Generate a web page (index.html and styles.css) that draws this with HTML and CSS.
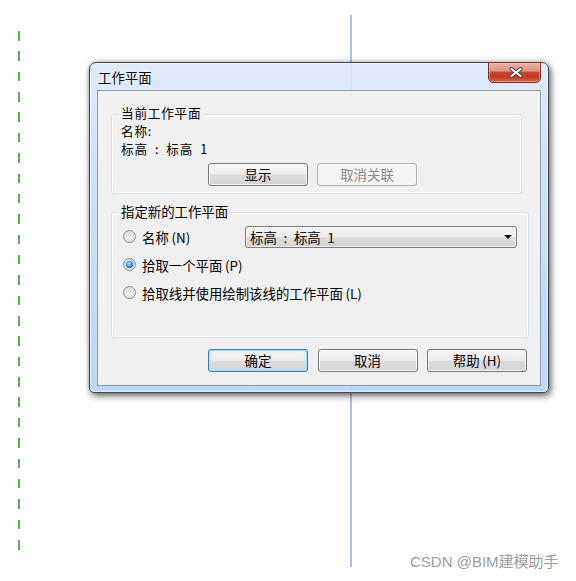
FILE: index.html
```html
<!DOCTYPE html>
<html lang="zh-CN">
<head>
<meta charset="utf-8">
<title>工作平面</title>
<link rel="stylesheet" href="styles.css">
</head>
<body>
<div class="canvas">
  <div class="dash-line"></div>
  <div class="ref-line"></div>

  <div class="dialog">
    <div class="titlebar">
      <span class="title">工作平面</span>
      <button class="close" type="button" aria-label="关闭">
        <svg width="14" height="11" viewBox="0 0 14 11">
          <path d="M2.5 2 L11.5 9 M11.5 2 L2.5 9" stroke="#4a3a38" stroke-width="4" stroke-linecap="round" fill="none"/>
          <path d="M2.5 2 L11.5 9 M11.5 2 L2.5 9" stroke="#ffffff" stroke-width="2.2" stroke-linecap="round" fill="none"/>
        </svg>
      </button>
    </div>

    <div class="client">
      <div class="group group-current">
        <div class="legend">当前工作平面</div>
        <div class="line">名称:</div>
        <div class="line">标高&#8194;:&#8194;标高&#8194;1</div>
        <div class="btn-row">
          <button class="btn" type="button">显示</button>
          <button class="btn" type="button" disabled>取消关联</button>
        </div>
      </div>

      <div class="group group-new">
        <div class="legend">指定新的工作平面</div>
        <div class="opt">
          <span class="radio"></span>
          <span class="opt-label">名称&#8201;(N)</span>
          <div class="combo">
            <span class="combo-text">标高&#8194;:&#8194;标高&#8194;1</span>
            <span class="arrow"></span>
          </div>
        </div>
        <div class="opt">
          <span class="radio checked"></span>
          <span class="opt-label">拾取一个平面&#8201;(P)</span>
        </div>
        <div class="opt">
          <span class="radio"></span>
          <span class="opt-label">拾取线并使用绘制该线的工作平面&#8201;(L)</span>
        </div>
      </div>

      <div class="actions">
        <button class="btn default" type="button">确定</button>
        <button class="btn" type="button">取消</button>
        <button class="btn" type="button">帮助&#8201;(H)</button>
      </div>
    </div>
  </div>

  <div class="watermark">CSDN @BIM建模助手</div>
</div>
</body>
</html>
```

FILE: styles.css
```css
html, body {
  margin: 0;
  padding: 0;
  background: #ffffff;
}

.canvas {
  position: relative;
  width: 576px;
  height: 581px;
  overflow: hidden;
  background: #ffffff;
  font-family: "Noto Sans CJK SC", "Liberation Sans", sans-serif;
  font-size: 13.4px;
  color: #000;
}

/* background drawing lines of the view */
.dash-line {
  position: absolute;
  left: 18px;
  top: 31px;
  width: 2px;
  height: 520px;
  background: repeating-linear-gradient(to bottom, #64a464 0, #64a464 9.5px, transparent 9.5px, transparent 20.36px);
}

.ref-line {
  position: absolute;
  left: 350px;
  top: 15px;
  width: 2px;
  height: 552px;
  background: #a9c0ea;
}

/* dialog window */
.dialog {
  position: absolute;
  left: 89px;
  top: 62px;
  width: 460px;
  height: 331px;
  box-sizing: border-box;
  border: 1px solid #3f4650;
  border-radius: 7px 7px 5px 5px;
  background: linear-gradient(to bottom, rgba(222, 234, 248, 0.93) 0%, rgba(204, 222, 244, 0.93) 30%, rgba(188, 213, 242, 0.95) 100%);
  box-shadow: inset 0 0 0 1px rgba(255, 255, 255, 0.55), 2px 3px 7px rgba(0, 0, 0, 0.55), 0 0 4px rgba(0, 0, 0, 0.25);
  padding: 0 7px 6px 7px;
  display: flex;
  flex-direction: column;
}

.titlebar {
  height: 27px;
  flex: none;
  display: flex;
  justify-content: space-between;
  align-items: flex-start;
}

.title {
  line-height: 28px;
  padding-left: 1px;
  color: #0a0a0a;
  text-shadow: 0 0 6px rgba(255, 255, 255, 0.9);
}

.close {
  margin-top: -1px;
  width: 53px;
  height: 21px;
  padding: 0;
  box-sizing: border-box;
  border: 1px solid #6e3429;
  border-radius: 0 0 5px 5px;
  background: linear-gradient(to bottom, #ebb3a7 0%, #e0907f 42%, #c9452d 50%, #c13b22 72%, #d9654b 100%);
  box-shadow: inset 0 0 0 1px rgba(255, 200, 190, 0.45);
  display: flex;
  align-items: center;
  justify-content: center;
}

.close svg {
  display: block;
  margin-left: 2px;
}

.client {
  flex: 1;
  box-sizing: border-box;
  border: 1px solid #8e9aa7;
  background: #f0f0f0;
  padding: 23px 11px 0 13px;
  display: flex;
  flex-direction: column;
}

/* group boxes */
.group {
  border: 1px solid #d5dfe5;
  border-radius: 3px;
  box-shadow: inset 0 0 0 1px #ffffff;
}

.legend {
  width: fit-content;
  margin-top: -10px;
  line-height: 16px;
  padding: 0 2px;
  background: #f0f0f0;
}

.group-current {
  margin-right: 7px;
  padding: 0 8px 7px 9px;
}

.group-current .legend {
  margin-left: -2px;
  margin-top: -11px;
  font-size: 12.6px;
  letter-spacing: 0.8px;
  line-height: 18px;
}

.line {
  font-size: 12.6px;
  letter-spacing: 0.8px;
  line-height: 18.3px;
}

.btn-row {
  margin-top: 4px;
  padding-left: 87px;
  display: flex;
  gap: 9px;
}

.group-new {
  margin-top: 18px;
  padding: 0 11px 30px 11px;
}

.group-new .legend {
  margin-left: -4px;
}

.opt {
  height: 28px;
  display: flex;
  align-items: center;
}

.legend + .opt {
  margin-top: 4px;
}

.radio {
  width: 13px;
  height: 13px;
  box-sizing: border-box;
  border-radius: 50%;
  border: 1px solid #8f9191;
  background: radial-gradient(circle at 50% 55%, #f6f6f6 0, #e6e6e6 45%, #cfcfcf 100%);
  margin-right: 6px;
  flex: none;
  display: flex;
  align-items: center;
  justify-content: center;
}

.radio.checked::after {
  content: "";
  width: 7px;
  height: 7px;
  border-radius: 50%;
  background: radial-gradient(circle at 45% 35%, #b9e5fb 0, #3d98dc 45%, #135fa8 100%);
  box-shadow: 0 0 1px #2a6aa8;
}

.opt-label {
  white-space: nowrap;
}

.combo {
  margin-left: auto;
  width: 272px;
  height: 22px;
  box-sizing: border-box;
  border: 1px solid #7a7a7a;
  border-radius: 3px;
  background: linear-gradient(to bottom, #f3f3f3 0%, #ececec 48%, #dedede 52%, #d1d1d1 100%);
  box-shadow: inset 0 0 0 1px rgba(255, 255, 255, 0.7);
  display: flex;
  align-items: center;
  justify-content: space-between;
  padding: 0 4px 0 4px;
}

.combo-text {
  white-space: nowrap;
}

.arrow {
  width: 0;
  height: 0;
  border-left: 4px solid transparent;
  border-right: 4px solid transparent;
  border-top: 4px solid #111;
}

/* buttons */
.btn {
  width: 100px;
  height: 23px;
  box-sizing: border-box;
  padding: 0;
  font: inherit;
  color: #000;
  border: 1px solid #777777;
  border-radius: 3px;
  background: linear-gradient(to bottom, #f4f4f4 0%, #ececec 48%, #dedede 52%, #d2d2d2 100%);
  box-shadow: inset 0 0 0 1px rgba(255, 255, 255, 0.75);
  line-height: 20px;
  text-align: center;
}

.btn:disabled {
  color: #8a8a8a;
  border-color: #adb2b5;
  background: #f4f4f4;
  box-shadow: none;
}

.btn.default {
  border-color: #3c7fb1;
  box-shadow: inset 0 0 0 1px #9fdcf5, inset 0 0 3px 1px #c8ecfb;
}

.actions {
  margin-top: 11px;
  display: flex;
  justify-content: flex-end;
  gap: 9.5px;
  padding-right: 2px;
}

.watermark {
  position: absolute;
  left: 410px;
  top: 552px;
  line-height: 20px;
  font-family: "Liberation Sans", "Noto Sans CJK SC", sans-serif;
  font-size: 15px;
  color: #9c9c9c;
  white-space: nowrap;
}
```
